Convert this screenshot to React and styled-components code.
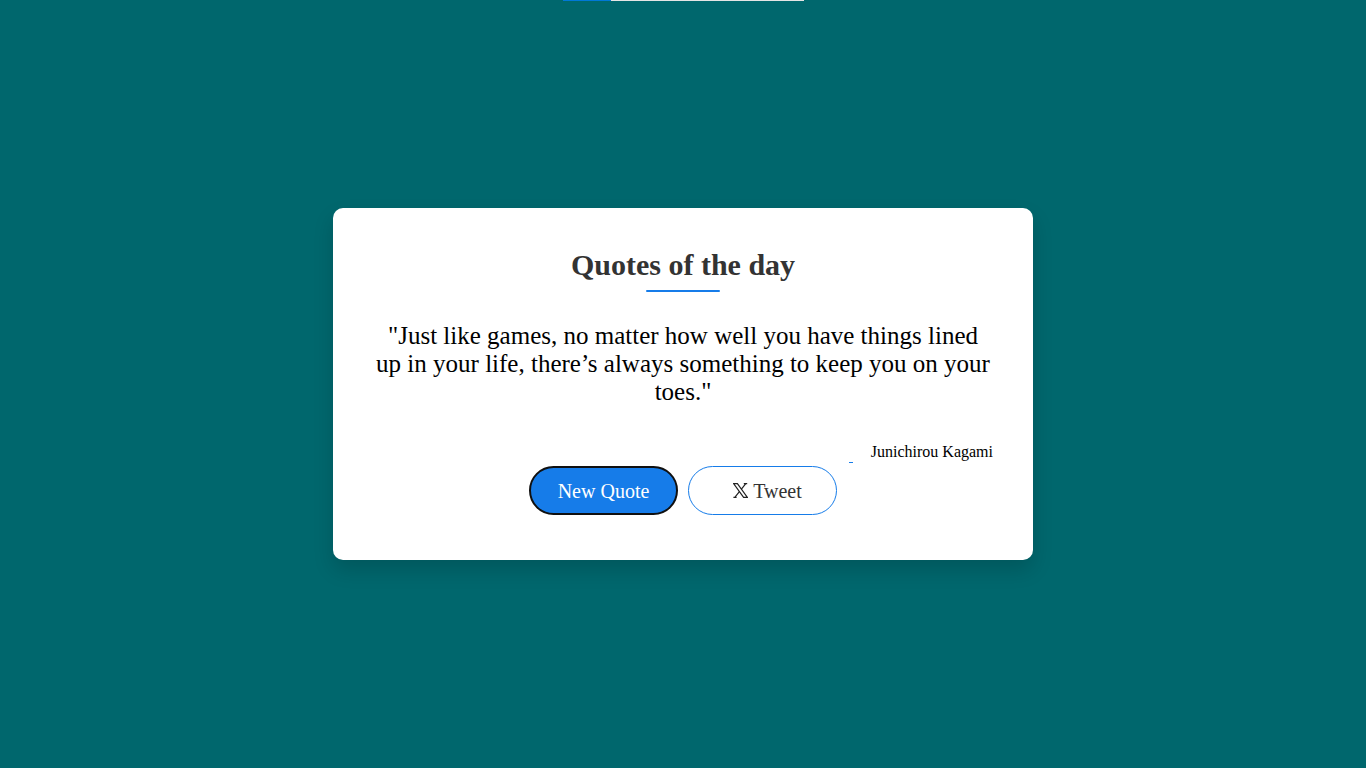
import React from "react";
import styled, { createGlobalStyle, css } from "styled-components";

const GlobalStyle = createGlobalStyle`
  * {
    box-sizing: border-box;
  }
  body {
    margin: 0;
    background: #00676d;
    font-family: "Liberation Serif", "Times New Roman", serif;
  }
`;

const Page = styled.main`
  position: relative;
  display: flex;
  align-items: center;
  justify-content: center;
  min-height: 100vh;
`;

const TopStrip = styled.div`
  position: absolute;
  top: 0;
  left: 0;
  right: 0;
  width: 241px;
  height: 1px;
  margin: 0 auto;
  background: linear-gradient(to right, #0078d7 20%, #e5e5e5 20%);
`;

const Card = styled.section`
  display: flex;
  flex-direction: column;
  width: 100%;
  max-width: 700px;
  padding: 40px 40px 45px;
  border-radius: 10px;
  background: #fff;
  box-shadow: 0 10px 20px rgba(0, 0, 0, 0.15);
  text-align: center;
`;

const Title = styled.h1`
  display: flex;
  flex-direction: column;
  align-items: center;
  gap: 8px;
  margin: 0 0 30px;
  color: #333;
  font-size: 30px;
  line-height: 34px;

  &::after {
    content: "";
    width: 74px;
    height: 2px;
    border-radius: 2px;
    background: #167ce9;
  }
`;

const Quote = styled.blockquote`
  margin: 0 0 37px;
  color: #000;
  font-size: 25px;
  line-height: 28px;
`;

const Author = styled.p`
  display: flex;
  align-items: flex-start;
  justify-content: flex-end;
  gap: 18px;
  min-height: 20px;
  margin: 0 0 3px;
  color: #000;
  font-size: 16px;
  line-height: 18px;

  &::before {
    content: "";
    align-self: flex-end;
    width: 4px;
    height: 1px;
    background: #167ce9;
  }
`;

const Actions = styled.div`
  display: flex;
  justify-content: center;
  gap: 10px;
`;

const Button = styled.button`
  display: flex;
  align-items: center;
  justify-content: center;
  gap: 5px;
  width: 149px;
  height: 49px;
  padding: 0 0 0 10px;
  border: 1px solid #167ce9;
  border-radius: 25px;
  background: #fff;
  color: #333;
  font-family: inherit;
  font-size: 20px;
  line-height: 22px;
  cursor: pointer;

  ${({ $primary }) =>
    $primary &&
    css`
      padding: 0;
      border: 2px solid #101010;
      background: #167ce9;
      color: #fff;
    `}
`;

const XIcon = () => (
  <svg width="15" height="15" viewBox="0 0 15 15" fill="none" stroke="#222" strokeWidth="1.2" aria-hidden="true">
    <path d="M0.6 0.6H4.4L14.4 14.4H10.6Z" />
    <path d="M10.8 0.6H14.2M12.8 0.6L8.4 6.2M6.4 8.6L1.8 14.4M0.4 14.4H3.6" />
  </svg>
);

export default function App() {
  return (
    <>
      <GlobalStyle />
      <Page>
        <TopStrip />
        <Card>
          <Title>Quotes of the day</Title>
          <Quote>
            "Just like games, no matter how well you have things lined up in
            your life, there’s always something to keep you on your toes."
          </Quote>
          <Author>Junichirou Kagami</Author>
          <Actions>
            <Button type="button" $primary>
              New Quote
            </Button>
            <Button type="button">
              <XIcon />
              Tweet
            </Button>
          </Actions>
        </Card>
      </Page>
    </>
  );
}
